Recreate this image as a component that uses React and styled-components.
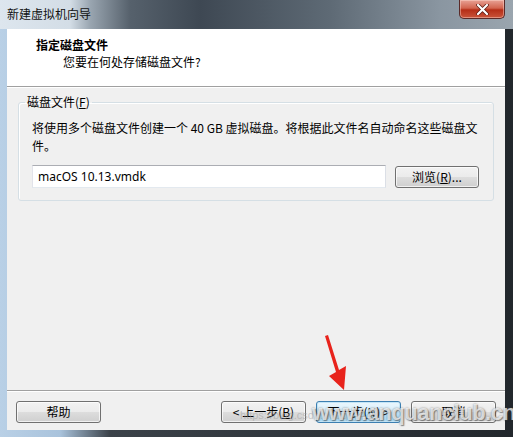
import React from 'react';
import styled, { createGlobalStyle } from 'styled-components';

const GlobalStyle = createGlobalStyle`
  html, body {
    margin: 0;
    padding: 0;
    background: #1c2024;
  }
  body {
    font-family: "Noto Sans", "Noto Sans CJK SC", sans-serif;
    font-size: 12px;
    color: #000;
  }
`;

const Window = styled.div`
  position: relative;
  width: 513px;
  height: 437px;
  display: flex;
  flex-direction: column;
  overflow: hidden;
  background: linear-gradient(90deg, #b9d0e6 0px, #a9c3dc 60px, #3b4249 110px, #22272c 100%);
`;

const TitleBar = styled.div`
  height: 29px;
  flex: none;
  display: flex;
  align-items: flex-start;
  background: linear-gradient(90deg, #dde6ee 0px, #d3dde6 70px, #9aa6b1 90px, #56616c 130px, #3e4853 200px, #5e6a75 330px, #8a96a1 440px, #9aa5ae 100%);
`;

const TitleText = styled.div`
  padding: 6px 0 0 7px;
  line-height: 16px;
  font-size: 12px;
  font-family: "Noto Sans CJK SC", sans-serif;
  color: #111;
`;

const CloseButton = styled.div`
  margin-left: auto;
  margin-right: 8px;
  width: 46px;
  height: 19px;
  box-sizing: border-box;
  border: 1px solid #5a2a28;
  border-top: none;
  border-radius: 0 0 5px 5px;
  background: linear-gradient(180deg, #e8a295 0%, #d2644f 45%, #b52e17 55%, #c9543a 100%);
  box-shadow: inset 0 0 0 1px rgba(255, 220, 210, 0.45);
  display: flex;
  align-items: center;
  justify-content: center;
`;

const Client = styled.div`
  flex: 1;
  margin: 0 8px 7px 7px;
  background: #f0f0f0;
  display: flex;
  flex-direction: column;
  font-family: "Noto Sans CJK SC", sans-serif;
`;

const Header = styled.div`
  flex: none;
  background: #fff;
  border-bottom: 1px solid #a0a0a0;
  box-sizing: border-box;
  height: 58px;
  padding: 8px 0 0 29px;
`;

const HeaderTitle = styled.div`
  font-weight: bold;
  line-height: 16px;
`;

const HeaderSub = styled.div`
  margin-top: 1px;
  padding-left: 27px;
  line-height: 16px;
`;

const Body = styled.div`
  flex: 1;
  padding: 7px 11px 0 11px;
  border-top: 1px solid #fff;
`;

const Group = styled.fieldset`
  margin: 0;
  padding: 0 13px 12px 13px;
  border: 1px solid #d5dfe5;
  border-radius: 3px;
  box-shadow: inset 1px 1px 0 #fff;
`;

const GroupLabel = styled.legend`
  margin-left: -7px;
  padding: 0 2px;
  line-height: 14px;
`;

const Description = styled.div`
  margin-top: 10px;
  line-height: 18px;
`;

const FileRow = styled.div`
  margin-top: 10px;
  display: flex;
  align-items: center;
  gap: 9px;
`;

const PathInput = styled.div`
  width: 354px;
  height: 23px;
  box-sizing: border-box;
  border: 1px solid #abadb3;
  border-color: #abadb3 #dbdfe6 #e3e9ef #e2e3ea;
  background: #fff;
  padding: 0 5px;
  line-height: 21px;
  font-family: "Noto Sans", sans-serif;
`;

const Button = styled.div`
  width: ${p => p.$w || 85}px;
  height: 22px;
  box-sizing: border-box;
  border: 1px solid ${p => (p.$default ? '#3c7fb1' : '#707070')};
  border-radius: 3px;
  background: ${p =>
    p.$default
      ? 'linear-gradient(180deg, #eaf6fd 0%, #d9f0fc 50%, #bee6fd 51%, #a7d9f5 100%)'
      : 'linear-gradient(180deg, #f2f2f2 0%, #ebebeb 50%, #dddddd 51%, #cfcfcf 100%)'};
  box-shadow: inset 0 0 0 1px ${p => (p.$default ? '#c4e5f6' : 'rgba(255,255,255,0.7)')};
  display: flex;
  align-items: center;
  justify-content: center;
  line-height: 14px;
  font-family: "Noto Sans CJK SC", sans-serif;
  color: #000;
`;

const Key = styled.span`
  text-decoration: underline;
`;

const Footer = styled.div`
  flex: none;
  box-sizing: border-box;
  height: 40px;
  border-top: 1px solid #a0a0a0;
  box-shadow: inset 0 1px 0 #fff;
  display: flex;
  align-items: flex-start;
  padding: 10px 9px 0 9px;
  gap: 10px;
`;

const Spacer = styled.div`
  flex: 1;
`;

const Arrow = styled.svg`
  position: absolute;
  left: 318px;
  top: 330px;
  pointer-events: none;
`;

const Watermark = styled.div`
  position: absolute;
  left: 312px;
  top: 400px;
  font-family: "Liberation Sans", sans-serif;
  font-weight: bold;
  font-size: 22px;
  letter-spacing: -0.5px;
  color: rgba(255, 255, 255, 0.72);
  text-shadow: 0 0 2px rgba(70, 70, 70, 0.6), 1px 1px 1px rgba(50, 50, 50, 0.5);
  pointer-events: none;
`;

const BlogMark = styled.div`
  position: absolute;
  left: 240px;
  top: 409px;
  font-family: "Liberation Sans", sans-serif;
  font-size: 11px;
  color: rgba(160, 160, 160, 0.55);
  pointer-events: none;
`;

export default function App() {
  return (
    <>
      <GlobalStyle />
      <Window>
        <TitleBar>
          <TitleText>新建虚拟机向导</TitleText>
          <CloseButton>
            <svg width="13" height="11" viewBox="0 0 13 11">
              <path d="M2 1 L11 10 M11 1 L2 10" stroke="#5a1a12" strokeWidth="3.6" strokeLinecap="round" />
              <path d="M2 1 L11 10 M11 1 L2 10" stroke="#fff" strokeWidth="2.2" strokeLinecap="round" />
            </svg>
          </CloseButton>
        </TitleBar>
        <Client>
          <Header>
            <HeaderTitle>指定磁盘文件</HeaderTitle>
            <HeaderSub>您要在何处存储磁盘文件?</HeaderSub>
          </Header>
          <Body>
            <Group>
              <GroupLabel>
                磁盘文件(<Key>F</Key>)
              </GroupLabel>
              <Description>
                将使用多个磁盘文件创建一个 40 GB 虚拟磁盘。将根据此文件名自动命名这些磁盘文
                <br />
                件。
              </Description>
              <FileRow>
                <PathInput>macOS 10.13.vmdk</PathInput>
                <Button $w={84}>
                  浏览(<Key>R</Key>)...
                </Button>
              </FileRow>
            </Group>
          </Body>
          <Footer>
            <Button>帮助</Button>
            <Spacer />
            <Button>
              &lt; 上一步(<Key>B</Key>)
            </Button>
            <Button $default>
              下一步(<Key>N</Key>) &gt;
            </Button>
            <Button>取消</Button>
          </Footer>
        </Client>
        <Arrow width="40" height="64" viewBox="0 0 40 64">
          <polygon points="7,6 10,5 21,40 28,36 26,60 11,46 18,42" fill="#e8231c" />
        </Arrow>
        <BlogMark>https://blog.csdn.net/qq_4</BlogMark>
        <Watermark>www.anquanclub.cn</Watermark>
      </Window>
    </>
  );
}
